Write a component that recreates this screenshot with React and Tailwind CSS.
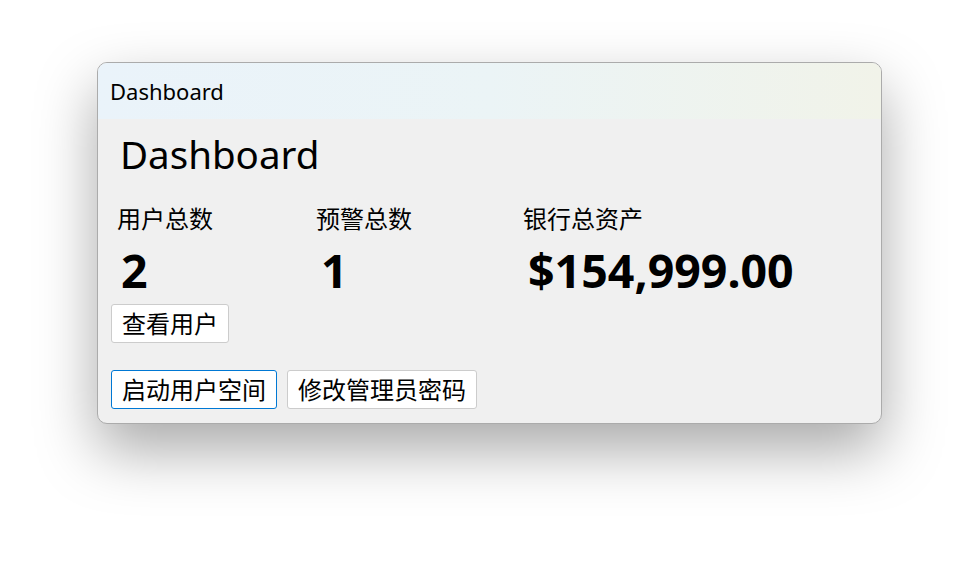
export default function App() {
  const font = {
    fontFamily: '"Noto Sans", "Noto Sans CJK SC", sans-serif',
  };

  return (
    <div className="min-h-[584px] w-[978px] bg-white pt-[62px] pl-[97px]" style={font}>
      <div className="w-[785px] h-[362px] rounded-[10px] border-[1.5px] border-[#ababab] bg-[#f0f0f0] overflow-hidden shadow-[0_26px_60px_rgba(0,0,0,0.34)]">
        {/* title bar */}
        <div className="h-[56px] flex items-center pl-[12px] bg-gradient-to-r from-[#eaf3fa] via-[#ebf4f6] to-[#f1f3e9] text-[22px] text-black">
          Dashboard
        </div>

        <div className="pl-[13px] pt-[11px]">
          <h1 className="pl-[9px] text-[38.5px] leading-[48px] text-black">Dashboard</h1>

          <div className="grid grid-cols-[199px_207px_1fr] pl-[6px] mt-[25px]">
            <div>
              <div className="text-[24px] leading-[32px]">用户总数</div>
              <div className="pl-[4px] mt-[8px] text-[46.5px] leading-[54px] font-bold">2</div>
            </div>
            <div>
              <div className="text-[24px] leading-[32px]">预警总数</div>
              <div className="pl-[5px] mt-[8px] text-[46.5px] leading-[54px] font-bold">1</div>
            </div>
            <div>
              <div className="text-[24px] leading-[32px]">银行总资产</div>
              <div className="pl-[5px] mt-[8px] text-[46.5px] leading-[54px] font-bold">$154,999.00</div>
            </div>
          </div>

          <button className="mt-[7px] h-[39px] px-[10px] bg-white border border-[#cccccc] rounded-[3px] text-[24px] leading-none text-black">
            查看用户
          </button>

          <div className="flex gap-[10px] mt-[27px]">
            <button className="h-[39px] px-[10px] bg-white border border-[#0078d4] rounded-[3px] text-[24px] leading-none text-black">
              启动用户空间
            </button>
            <button className="h-[39px] px-[10px] bg-white border border-[#cccccc] rounded-[3px] text-[24px] leading-none text-black">
              修改管理员密码
            </button>
          </div>
        </div>
      </div>
    </div>
  );
}
